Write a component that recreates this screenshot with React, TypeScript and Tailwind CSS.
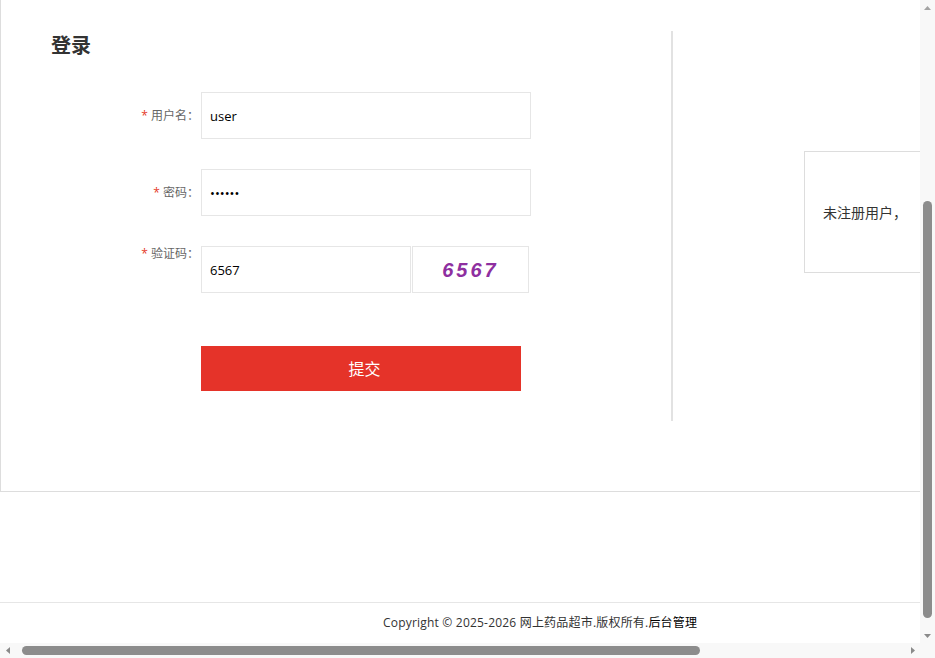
const font = { fontFamily: '"Open Sans", "Noto Sans CJK SC", sans-serif' };

function Row({ label, top, children }: { label: string; top?: boolean; children: React.ReactNode }) {
  return (
    <div className={`flex ${top ? 'items-start' : 'items-center'}`}>
      <label className="w-[149px] pr-px text-right text-[12px] leading-[16px] text-[#666]">
        <span className="text-[#e53a2a] mr-[3px]">*</span>
        {label}：
      </label>
      <div className="ml-px flex">{children}</div>
    </div>
  );
}

function Arrow({ dir, color }: { dir: 'up' | 'down' | 'left' | 'right'; color: string }) {
  const pts = {
    up: '0,4 3.5,0 7,4',
    down: '0,0 7,0 3.5,4',
    left: '4,0 4,7 0,3.5',
    right: '0,0 4,3.5 0,7',
  }[dir];
  const vertical = dir === 'up' || dir === 'down';
  return (
    <svg width={vertical ? 7 : 4} height={vertical ? 4 : 7} viewBox={vertical ? '0 0 7 4' : '0 0 4 7'}>
      <polygon points={pts} fill={color} />
    </svg>
  );
}

export default function App() {
  return (
    <div className="w-[935px] h-[658px] flex flex-col overflow-hidden bg-white text-[#333]" style={font}>
      <div className="flex flex-1 min-h-0">
        {/* page viewport, scrolled to the bottom */}
        <div className="flex-1 min-w-0 overflow-hidden flex flex-col justify-end">
          <div className="w-[1210px] shrink-0">
            {/* login box */}
            <div className="w-[1200px] border border-[#ddd] pt-[40px] pb-[70px] pl-[50px] flex items-start">
              <div className="w-[620px] shrink-0">
                <h2 className="text-[20px] leading-[30px] font-bold text-[#333]">登录</h2>

                <div className="mt-[31px] flex flex-col gap-[30px]">
                  <Row label="用户名">
                    <input
                      readOnly
                      defaultValue="user"
                      className="w-[330px] h-[47px] border border-[#e6e6e6] px-[8px] text-[13px] text-black outline-none"
                    />
                  </Row>
                  <Row label="密码">
                    <input
                      type="password"
                      readOnly
                      defaultValue="123456"
                      className="w-[330px] h-[47px] border border-[#e6e6e6] px-[8px] text-[13px] text-black outline-none"
                    />
                  </Row>
                  <Row label="验证码" top>
                    <input
                      readOnly
                      defaultValue="6567"
                      className="w-[210px] h-[47px] border border-[#e6e6e6] px-[8px] text-[13px] text-black outline-none"
                    />
                    <div className="ml-px w-[117px] h-[47px] border border-[#e6e6e6] flex items-center justify-center">
                      <span
                        className="text-[20px] font-bold italic tracking-[3px] text-[#8e2fa0]"
                        style={{ fontFamily: '"Liberation Sans", Arial, sans-serif' }}
                      >
                        6567
                      </span>
                    </div>
                  </Row>
                </div>

                <button className="mt-[53px] ml-[150px] w-[320px] h-[45px] pl-[7px] bg-[#e53329] text-white text-[16px]">
                  提交
                </button>
              </div>

              <div className="w-[2px] h-[390px] bg-[#e2e2e2] shrink-0" />

              <div className="pl-[131px] pt-[120px]">
                <div className="w-[300px] h-[122px] border border-[#ddd] flex items-center px-[18px] text-[14px] text-[#333]">
                  未注册用户，
                </div>
              </div>
            </div>

            <div className="h-[110px]" />

            {/* footer */}
            <footer className="border-t border-[#e6e6e6] h-[41px] flex items-center pl-[383px] text-[12px] tracking-[0.2px] text-[#333]">
              Copyright © 2025-2026 网上药品超市.版权所有.
              <a href="#" className="text-black">后台管理</a>
            </footer>
          </div>
        </div>

        {/* vertical scrollbar */}
        <div className="w-[15px] shrink-0 bg-[#f8f8f8] flex flex-col">
          <div className="h-[15px] flex items-center justify-center">
            <Arrow dir="up" color="#a3a3a3" />
          </div>
          <div className="flex-1 flex flex-col justify-end items-center pb-[10px]">
            <div className="w-[9px] h-[417px] rounded-full bg-[#8c8c8c]" />
          </div>
          <div className="h-[15px] flex items-center justify-center">
            <Arrow dir="down" color="#8a8a8a" />
          </div>
        </div>
      </div>

      {/* horizontal scrollbar */}
      <div className="h-[15px] shrink-0 bg-[#f8f8f8] flex">
        <div className="w-[15px] flex items-center justify-center">
          <Arrow dir="left" color="#8a8a8a" />
        </div>
        <div className="flex-1 flex items-center pl-[7px]">
          <div className="w-[678px] h-[9px] rounded-full bg-[#8c8c8c]" />
        </div>
        <div className="w-[15px] flex items-center justify-center">
          <Arrow dir="right" color="#8a8a8a" />
        </div>
        <div className="w-[15px]" />
      </div>
    </div>
  );
}
